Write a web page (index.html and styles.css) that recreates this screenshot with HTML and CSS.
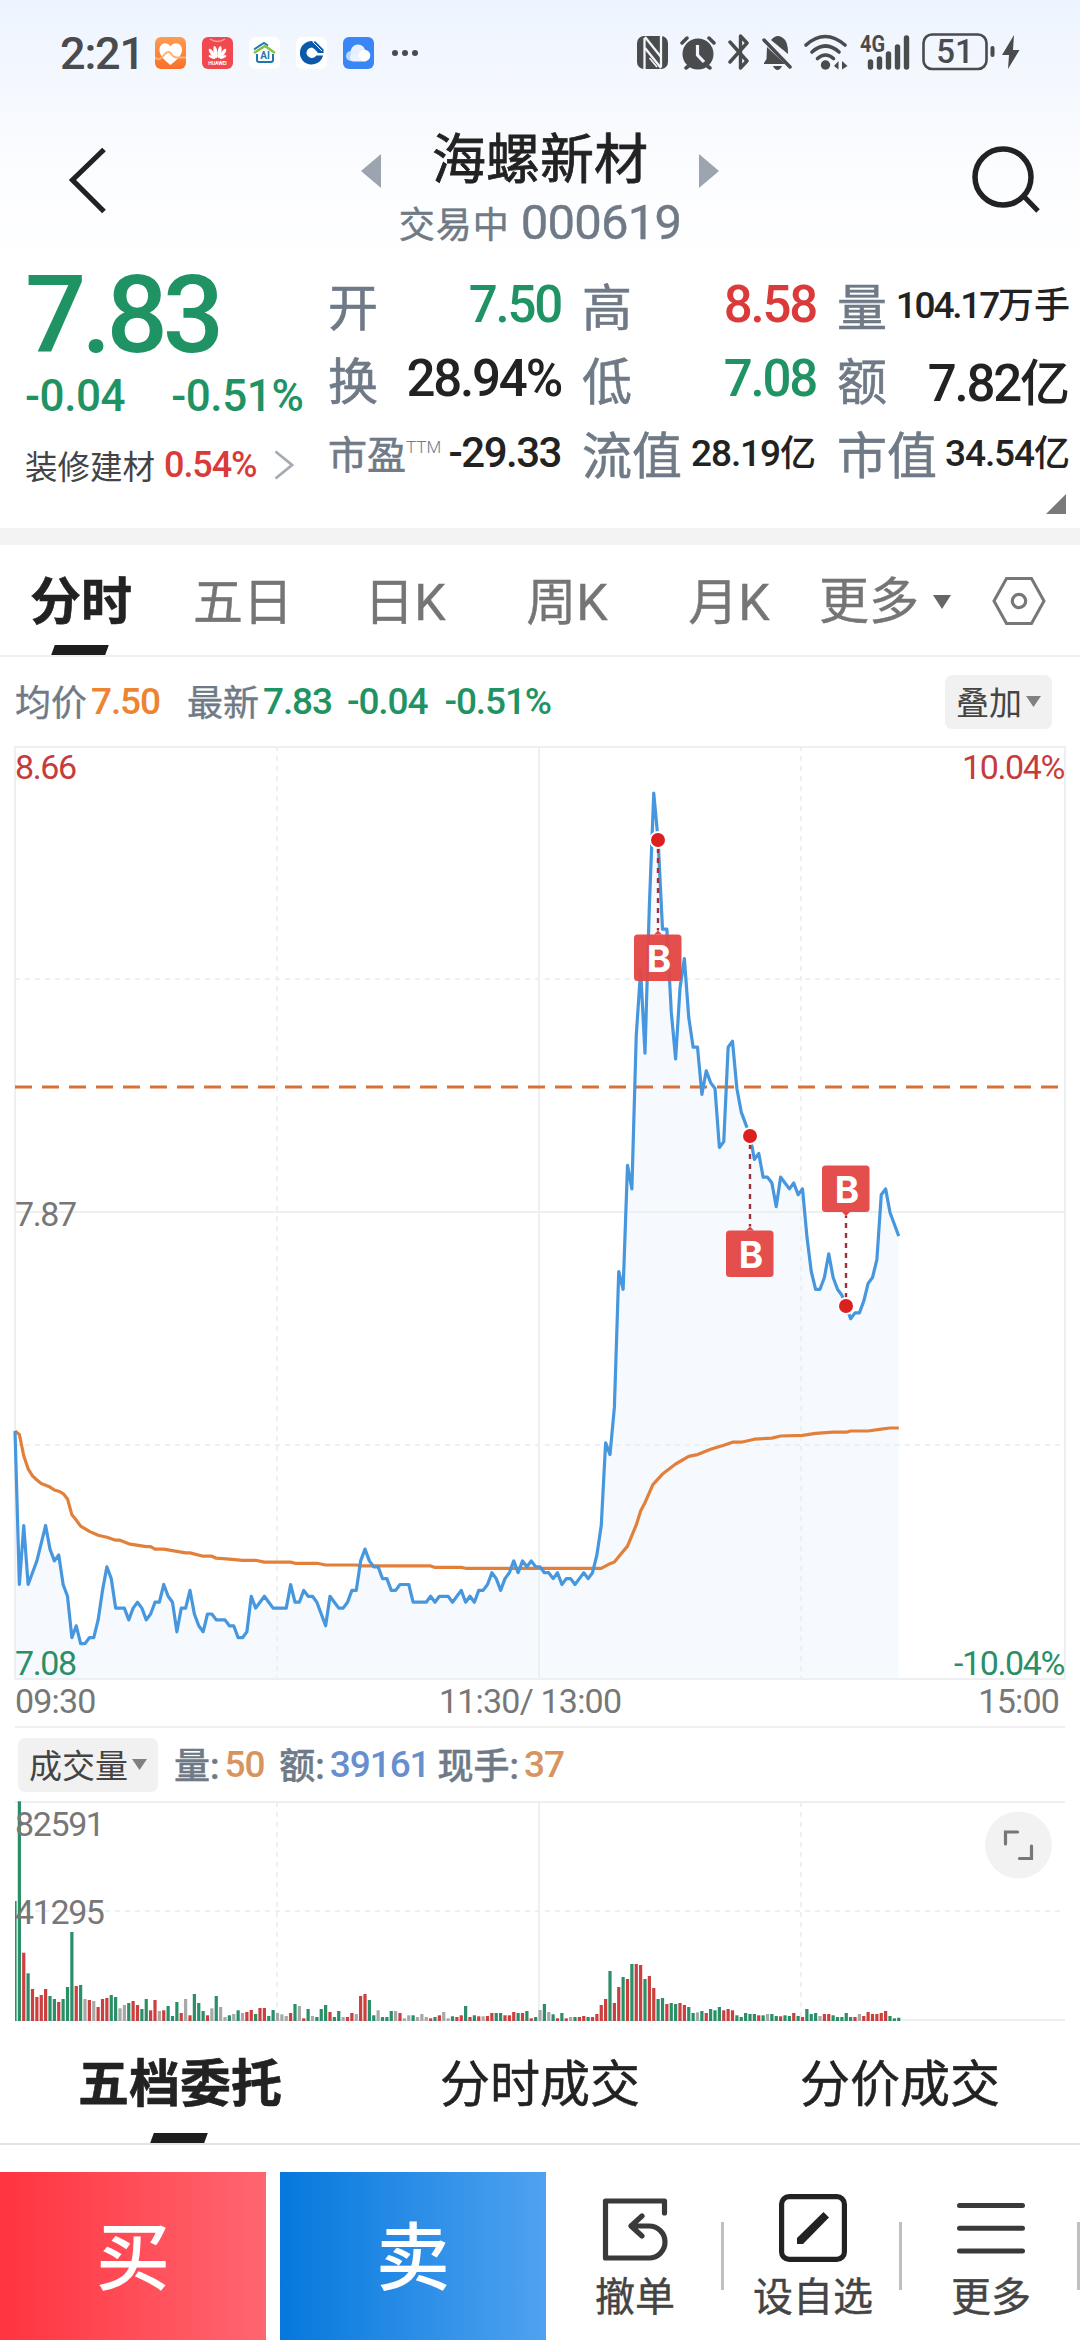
FILE: index.html
```html
<!DOCTYPE html>
<html lang="zh-CN">
<head>
<meta charset="utf-8">
<title>海螺新材 000619</title>
<link rel="stylesheet" href="styles.css">
</head>
<body>
<div class="screen">
  <div class="status">
    <span class="clock">2:21</span>
    <div class="apps">
      <svg width="31" height="32" viewBox="0 0 31 32"><defs><linearGradient id="og" x1="0" y1="0" x2="0" y2="1"><stop offset="0" stop-color="#ff9c50"/><stop offset="1" stop-color="#f9702a"/></linearGradient></defs><rect width="31" height="32" rx="6" fill="url(#og)"/><path d="M15.500 28C8 22 4.500 18 4.500 13C4.500 6 12 4 15.500 9.500C19 4 27 6 27 13C27 18 23 22 15.500 28Z" fill="#fff"/><path d="M0 20C3 24 6 22 9 18C12 14 15 14 17 18C20 22 23 20 31 20.500" fill="none" stroke="#ffb277" stroke-width="2"/></svg>
      <svg width="31" height="32" viewBox="0 0 31 32"><rect width="31" height="32" rx="6" fill="#f04a50"/><path d="M8 2Q15.500 7 23 2" fill="none" stroke="#ffa3a3" stroke-width="1.300"/><g fill="#fff"><ellipse cx="13.500" cy="15" rx="1.900" ry="6" transform="rotate(-10 13.500 15)"/><ellipse cx="17.500" cy="15" rx="1.900" ry="6" transform="rotate(10 17.500 15)"/><ellipse cx="10.300" cy="16.500" rx="1.800" ry="5.500" transform="rotate(-35 10.300 16.500)"/><ellipse cx="20.700" cy="16.500" rx="1.800" ry="5.500" transform="rotate(35 20.700 16.500)"/><ellipse cx="10" cy="20" rx="1.300" ry="3.500" transform="rotate(-68 10 20)"/><ellipse cx="21" cy="20" rx="1.300" ry="3.500" transform="rotate(68 21 20)"/></g><text x="15.500" y="27.500" class="tiny" text-anchor="middle" fill="#fff">HUAWEI</text></svg>
      <svg width="31" height="32" viewBox="0 0 31 32"><rect width="31" height="32" rx="6" fill="#fff"/><g fill="none" stroke-width="2"><path d="M5 12.500L15 6L19 8.500" stroke="#1c7fae"/><path d="M5 16L16 9L26 16" stroke="#86bf3c" stroke-width="2.400"/><path d="M8 17V23Q8 25 10 25H22Q24 25 24 23V17" stroke="#1f78a8"/></g><text x="16" y="22" class="tiny ai" text-anchor="middle" fill="#1f78a8">AI</text></svg>
      <svg width="31" height="32" viewBox="0 0 31 32"><rect width="31" height="32" rx="6" fill="#fff"/><path d="M18.500 4.500A11.700 11.700 0 1 0 27 18.500H20.500A5.500 5.500 0 0 1 10.500 16A5.500 5.500 0 0 1 16 10.500L18.500 12H24L16 4.500Z" fill="#0a5aa9"/><path d="M19 4L27.500 12.500V16H22L15 8Z" fill="#0a5aa9"/><path d="M17 5L26 14" stroke="#fff" stroke-width="1"/><path d="M15.500 11L20.500 16L15.500 21L10.500 16Z" fill="#fff"/></svg>
      <svg width="31" height="32" viewBox="0 0 31 32"><rect width="31" height="32" rx="6" fill="#3b86f6"/><circle cx="8" cy="19" r="5" fill="#b9d9ff"/><circle cx="15" cy="15" r="7.500" fill="#e4f0ff"/><rect x="7" y="17" width="18" height="7.500" rx="3.700" fill="#e9f3ff"/><circle cx="21.500" cy="18.500" r="5.800" fill="#fff"/></svg>
      <svg class="dots" width="28" height="32" viewBox="0 0 28 32" fill="#4a4b4d"><circle cx="4" cy="16" r="3"/><circle cx="14" cy="16" r="3"/><circle cx="24" cy="16" r="3"/></svg>
    </div>
    <div class="sys">
      <svg width="31" height="36" viewBox="0 0 31 36"><rect y="2" width="31" height="33" rx="7" fill="#4a4b4d"/><path d="M7.500 4V35M24 2V33" fill="none" stroke="#f1f5fc" stroke-width="2.300"/><path d="M8 3L24 23M8 14L24 34" fill="none" stroke="#f1f5fc" stroke-width="2.300"/><path d="M12.500 24L20 33" fill="none" stroke="#f1f5fc" stroke-width="1.500"/></svg>
      <svg width="36" height="36" viewBox="0 0 36 36"><circle cx="18" cy="20" r="15.500" fill="#4a4b4d"/><path d="M2 9L7 4M34 9L29 4M6 34L10 31M30 34L26 31" stroke="#4a4b4d" stroke-width="3.500" stroke-linecap="round"/><path d="M17.500 11V21L24 28" fill="none" stroke="#f1f5fc" stroke-width="3.200"/></svg>
      <svg width="22" height="36" viewBox="0 0 22 36"><path d="M2 8L19 27L12.500 34V2L19 9L2 28" fill="none" stroke="#4a4b4d" stroke-width="3.400" stroke-linejoin="round" stroke-linecap="round"/></svg>
      <svg width="30" height="36" viewBox="0 0 30 36"><path d="M5 13L23 30H2V29L4.500 25ZM9 6Q15 -1 21 4Q26 7 26 19V20Z" fill="#4a4b4d"/><path d="M2 6L28 33" stroke="#4a4b4d" stroke-width="3.500" stroke-linecap="round"/><path d="M11 32H20Q18 36 15.500 36T11 32Z" fill="#4a4b4d"/></svg>
      <svg width="44" height="36" viewBox="0 0 44 36"><g fill="none" stroke="#4a4b4d" stroke-width="3.600" stroke-linecap="round"><path d="M2 11Q21 -6 41 11"/><path d="M8 18Q21.500 6 35 18"/><path d="M13.500 24.500Q21.500 17.500 29.500 24.500"/></g><circle cx="21.500" cy="31" r="4.700" fill="#4a4b4d"/><path d="M30 32L34.500 27V35.500ZM43.500 32L38 27V35.500Z" fill="#4a4b4d"/></svg>
      <svg class="sig" width="50" height="46" viewBox="0 -6 50 46"><text x="0" y="18" class="net" textLength="25" lengthAdjust="spacingAndGlyphs">4G</text><path d="M10.500 28V33M19.500 25V33M28.500 20V33M37.500 13V33M46.500 4V33" stroke="#4a4b4d" stroke-width="5.400" stroke-linecap="round"/></svg>
      <svg class="batt" width="98" height="40" viewBox="0 0 98 40"><rect x="1.500" y="2.500" width="63" height="34.500" rx="8.500" fill="none" stroke="#4a4b4d" stroke-width="2.600"/><text x="33" y="30.500" class="pct" text-anchor="middle">51</text><path d="M70.500 16V23" stroke="#4a4b4d" stroke-width="4" stroke-linecap="round"/><path d="M92 3L80 23H87L86 37L97.500 18H91Z" fill="#4a4b4d"/></svg>
    </div>
  </div>

  <header class="head">
    <svg class="back" width="40" height="68" viewBox="0 0 40 68"><path d="M36 3.500L4.500 34L36 65.500" fill="none" stroke="#222" stroke-width="5.200"/></svg>
    <div class="titles">
      <svg width="20" height="34" viewBox="0 0 20 34"><path d="M20 0V34L0 17Z" fill="#9ba4af"/></svg>
      <div class="name"><h1>海螺新材</h1><p><span>交易中</span> <b>000619</b></p></div>
      <svg width="20" height="34" viewBox="0 0 20 34"><path d="M0 0V34L20 17Z" fill="#9ba4af"/></svg>
    </div>
    <svg class="search" width="70" height="70" viewBox="0 0 70 70"><circle cx="31" cy="31" r="28" fill="none" stroke="#222" stroke-width="5.500"/><path d="M52 50.500L66 65" stroke="#222" stroke-width="5"/></svg>
  </header>

  <section class="quote">
    <div class="last">
      <div class="price green">7.83</div>
      <div class="chg green"><span>-0.04</span><span>-0.51%</span></div>
      <div class="sector"><span>装修建材</span><b class="red">0.54%</b><svg width="20" height="30" viewBox="0 0 20 30"><path d="M1.500 1.500L18 15L1.500 28.500" fill="none" stroke="#a3abb5" stroke-width="2.800"/></svg></div>
    </div>
    <div class="grid">
      <div class="cell"><label>开</label><b class="green">7.50</b></div>
      <div class="cell"><label>高</label><b class="red">8.58</b></div>
      <div class="cell"><label>量</label><b class="sm tight">104.17<i>万手</i></b></div>
      <div class="cell"><label>换</label><b>28.94%</b></div>
      <div class="cell"><label>低</label><b class="green">7.08</b></div>
      <div class="cell"><label>额</label><b>7.82<i>亿</i></b></div>
      <div class="cell"><label class="pe">市盈<sup>TTM</sup></label><b class="md">-29.33</b></div>
      <div class="cell"><label>流值</label><b class="sm">28.19<i>亿</i></b></div>
      <div class="cell"><label>市值</label><b class="sm">34.54<i>亿</i></b></div>
    </div>
    <svg class="corner" width="20" height="20" viewBox="0 0 20 20"><path d="M20 0V20H0Z" fill="#7a7a7a"/></svg>
  </section>

  <nav class="tabs">
    <span class="tab on">分时</span><span class="tab">五日</span><span class="tab">日K</span><span class="tab">周K</span><span class="tab">月K</span>
    <span class="tab more">更多<svg width="18" height="14" viewBox="0 0 18 14"><path d="M0 0H18L9 14Z" fill="#666"/></svg></span>
    <svg class="hex" width="54" height="50" viewBox="0 0 54 50"><path d="M14.500 2.500H39.500L52 25L39.500 47.500H14.500L2 25Z" fill="none" stroke="#777" stroke-width="3"/><circle cx="27" cy="25" r="6.700" fill="none" stroke="#777" stroke-width="3.200"/></svg>
  </nav>

  <div class="info">
    <span class="k">均价</span><b class="orange">7.50</b>
    <span class="k k2">最新</span><b class="green">7.83</b><b class="green d1">-0.04</b><b class="green d2">-0.51%</b>
    <span class="pill">叠加<svg width="15" height="11" viewBox="0 0 15 11"><path d="M0 0H15L7.500 11Z" fill="#808080"/></svg></span>
  </div>

  <svg id="price-chart" class="chart" width="1080" height="934" viewBox="0 747 1080 934"></svg>
  <div class="axis"><span>09:30</span><span>11:30/ 13:00</span><span>15:00</span></div>

  <div class="volhead">
    <span class="pill">成交量<svg width="15" height="11" viewBox="0 0 15 11"><path d="M0 0H15L7.500 11Z" fill="#808080"/></svg></span>
    <span class="k">量:</span><b class="tan v1">50</b>
    <span class="k">额:</span><b class="blue v2">39161</b>
    <span class="k">现手:</span><b class="tan">37</b>
  </div>
  <svg id="volume-chart" class="chart" width="1080" height="220" viewBox="0 1802 1080 220"></svg>

  <nav class="subtabs"><span class="on">五档委托</span><span>分时成交</span><span>分价成交</span></nav>

  <footer class="actions">
    <button class="buy">买</button>
    <button class="sell">卖</button>
    <div class="act"><svg width="68" height="68" viewBox="0 0 68 68"><path d="M63.500 19V7H4.500V64H48A16 16 0 0 0 48 32H31M41 22L30 32L41 42" fill="none" stroke="#3a3a3a" stroke-width="5.200" stroke-linecap="round" stroke-linejoin="round"/></svg><span>撤单</span></div>
    <div class="act"><svg width="68" height="68" viewBox="0 0 68 68"><rect x="2.600" y="2.600" width="62.800" height="62.800" rx="7.500" fill="none" stroke="#222" stroke-width="5.200"/><path d="M44.500 18L50 23.500L24 50H18V44Z" fill="#222"/></svg><span>设自选</span></div>
    <div class="act"><svg width="68" height="68" viewBox="0 0 68 68"><path d="M2.500 11.500H65.500M2.500 34.200H65.500M2.500 57H65.500" stroke="#3a3a3a" stroke-width="5" stroke-linecap="round"/></svg><span>更多</span></div>
  </footer>
</div>
<script src="chart.js"></script>
</body>
</html>
```
FILE: styles.css
```css
* { box-sizing: border-box; margin: 0; padding: 0; }
body {
  width: 1080px;
  height: 2340px;
  overflow: hidden;
  background: #fff;
  color: #222;
  font-family: Roboto, "Noto Sans CJK SC", sans-serif;
}
b, i { font-style: normal; font-weight: 500; }
svg { display: block; flex: none; }
.screen {
  width: 1080px;
  height: 2340px;
  display: flex;
  flex-direction: column;
  background: linear-gradient(#edf4ff 0, #f5f8fe 90px, #fcfdff 180px, #fff 270px);
}
.green { color: #1f9363; }
.red { color: #da3a3a; }
.orange { color: #ec8431; }
.tan { color: #d89460; }
.blue { color: #678fd0; }

.status { height: 106px; display: flex; padding-left: 60px; }
.clock { width: 95px; font-size: 45px; line-height: 107px; font-weight: 500; color: #4a4b4d; letter-spacing: -1.2px; }
.apps { display: flex; gap: 16px; padding-top: 37px; }
.dots { margin-left: 1px; }
.sys { display: flex; gap: 12px; margin-left: auto; margin-right: 60px; padding-top: 34px; }
.batt { margin-top: -2px; }
.sig { margin-top: -6px; }
.tiny { font: 700 5px Roboto, sans-serif; }
.ai { font-size: 10px; }
.net { font: 700 23px Roboto, sans-serif; fill: #4a4b4d; }
.pct { font: 500 33px Roboto, sans-serif; fill: #4a4b4d; }

.head { height: 154px; display: flex; justify-content: space-between; padding: 0 38px 0 68px; }
.back { margin-top: 40px; }
.search { margin-top: 40px; }
.titles { display: flex; padding-left: 0; }
.titles > svg { margin-top: 48px; }
.name { width: 318px; text-align: center; }
.name h1 { font-size: 54px; line-height: 70px; font-weight: 400; -webkit-text-stroke: .8px #222; margin-top: 20px; margin-bottom: -4px; }
.name p { height: 60px; display: flex; justify-content: center; align-items: center; gap: 11px; color: #6f7a86; white-space: nowrap; }
.name p span { font-size: 36px; letter-spacing: 1px; -webkit-text-stroke: .5px; }
.name p b { font-size: 49px; font-weight: 400; letter-spacing: -.8px; -webkit-text-stroke: .4px; }

.quote { height: 269px; display: flex; position: relative; }
.last { width: 328px; padding-left: 25px; }
.price { font-size: 108px; line-height: 110px; font-weight: 500; letter-spacing: -5px; }
.chg { display: flex; gap: 46px; font-size: 44px; line-height: 52px; font-weight: 500; letter-spacing: -.4px; }
.sector { display: flex; align-items: center; height: 40px; margin-top: 23px; font-size: 32.500px; color: #444; }
.sector b { font-size: 36px; margin: 0 18px 0 9px; letter-spacing: -1.100px; }
.grid { display: grid; grid-template-columns: 233px 234px 233px; column-gap: 21px; grid-template-rows: 74px 74px 74px; padding-top: 7px; align-content: start; }
.cell { display: flex; justify-content: space-between; align-items: center; white-space: nowrap; }
.cell label { font-size: 50px; color: #6f7a86; -webkit-text-stroke: .6px; }
.cell b { font-size: 51px; letter-spacing: -2.200px; padding-top: 2px; }
.cell b i { font-size: 50px; letter-spacing: 0; }
.cell .sm { font-size: 37px; padding: 0 0 3px; letter-spacing: -1.100px; }
.cell .tight { letter-spacing: -2.200px; }
.cell .sm i { font-size: 36px; }
.cell .md { font-size: 42px; letter-spacing: -1.500px; }
.cell .pe { font-size: 39px; display: flex; }
.pe sup { font-size: 17px; font-weight: 300; line-height: 17px; margin-top: 15px; -webkit-text-stroke: 0; }
.corner { position: absolute; right: 14px; bottom: 14px; }

.tabs { height: 129px; border-top: 17px solid #f3f3f4; border-bottom: 2px solid #f0f0f0; display: flex; color: #757575; font-size: 50px; line-height: 116px; white-space: nowrap; }
.tab { width: 162px; height: 110px; text-align: center; position: relative; -webkit-text-stroke: .4px; }
.tab.on, .subtabs .on { color: #222; font-weight: 700; font-size: 51px; -webkit-text-stroke: .6px; }
.tab.on::after, .subtabs .on::after {
  content: ""; position: absolute; left: 50%; bottom: 0; width: 54px; height: 10px; margin-left: -28px;
  background: #1d1d1d; transform: skewX(-20deg);
}
.tab.more { width: 150px; display: flex; align-items: center; gap: 14px; margin-left: 9px; padding-top: 4px; }
.hex { margin: 31px 0 0 23px; }

.info { height: 90px; display: flex; align-items: center; padding: 0 28px 0 15px; font-size: 37px; white-space: nowrap; }
.k { font-size: 36px; color: #6f7a86; -webkit-text-stroke: .4px; padding-bottom: 3px; }
.info b, .volhead b { letter-spacing: -1.100px; }
.info .k { margin-right: 4px; }
.info .k2 { margin-left: 27px; }
.d1 { margin-left: 15px; }
.d2 { margin-left: 17px; }
.pill { display: flex; align-items: center; gap: 4px; height: 54px; padding: 0 11px 1px; border-radius: 7px; background: #f1f1f1; color: #444; font-size: 33px; }
.info .pill { margin-left: auto; }

.axis { height: 48px; margin: 0 15px; border-bottom: 2px solid #f0f0f0; display: grid; grid-template-columns: 424px 1fr auto; font-size: 34px; line-height: 42px; color: #777; letter-spacing: -.8px; }
.axis span:last-child { padding-right: 6px; }
.volhead { height: 73px; display: flex; align-items: center; padding-left: 18px; font-size: 37px; white-space: nowrap; }
.volhead .pill { margin-right: 16px; }
.volhead .k { font-weight: 500; margin-right: 5px; }
.v1 { margin-right: 15px; }
.v2 { margin-right: 8px; }
.chart text { font: 400 34px Roboto, sans-serif; letter-spacing: -1.400px; }
.chart .mark { font: 700 37px Inter, sans-serif; fill: #fff; letter-spacing: 0; }

.subtabs { height: 124px; border-bottom: 2px solid #e3e3e3; display: grid; grid-template-columns: repeat(3, 360px); text-align: center; font-size: 50px; line-height: 128px; -webkit-text-stroke: .5px; }
.subtabs span { position: relative; height: 122px; }
.actions { margin-top: 27px; height: 168px; display: flex; }
.actions button { border: 0; width: 266px; color: #fff; font: 500 74px/160px "Noto Sans CJK SC", sans-serif; padding-bottom: 8px; }
.buy { background: linear-gradient(90deg, #ff3440, #ff6670); margin-right: 14px; }
.sell { background: linear-gradient(90deg, #0578dd, #4fa2f0); }
.act { width: 178px; height: 168px; padding-top: 22px; display: flex; flex-direction: column; align-items: center; font-size: 40px; line-height: 66px; color: #444; background: linear-gradient(#c0c0c0, #c0c0c0) right 50px / 3px 68px no-repeat; }
.act span { margin-top: 3px; -webkit-text-stroke: .4px; }
```
FILE: chart.js
```js
const GREEN = '#2a8f68', RED = '#cb403f', GREY = '#a8a8a8';
const LEFT = 15, MINUTE = 4.375;
const px = m => LEFT + m * MINUTE;
const py = p => 747 + (8.66 - p) * 590.5;

// Last price of every minute, in cents
const prices = [
  750,724,734,724,726,728,731,734,730,728,729,724,722,715,717,714,714,715,715,718,
  723,727,725,720,720,720,718,720,721,720,718,719,721,721,724,722,721,716,720,720,
  723,719,717,716,719,719,718,718,718,717,717,715,715,716,722,720,721,722,721,720,
  720,720,720,724,721,721,723,722,722,721,719,717,722,721,720,720,721,723,723,728,
  730,728,727,727,725,725,723,723,724,724,724,721,721,721,721,722,721,722,722,722,
  721,722,723,721,722,721,723,723,724,726,725,723,725,726,728,726,728,727,728,727,
  727,726,726,725,726,724,725,725,724,725,726,725,726,729,734,748,746,754,777,774,
  795,791,817,828,814,839,858,850,835,835,821,813,825,830,820,815,815,807,811,809,
  808,798,799,815,816,808,804,802,800,796,797,793,793,792,788,793,792,791,792,790,
  791,783,777,774,774,776,780,776,774,773,771,769,770,770,772,775,776,779,790,791,
  787,785,783
];

// Average price: [minute, price]
const average = [
  [0,7.5],[1,7.494],[2,7.458],[3,7.436],[4,7.424],[5,7.417],[6,7.411],[7,7.408],[8,7.405],[9,7.4],[10,7.398],
  [11,7.394],[12,7.385],[13,7.358],[14,7.349],[15,7.339],[17,7.33],[19,7.3235],[21,7.32],[23,7.315],[24,7.315],
  [26,7.309],[30,7.304],[31,7.304],[32,7.3],[34,7.3],[39,7.2935],[40,7.2935],[43,7.288],[45,7.288],[46,7.2845],
  [49,7.283],[52,7.281],[55,7.281],[57,7.278],[63,7.278],[64,7.276],[69,7.276],[71,7.273],[78,7.273],[79,7.2715],
  [95,7.2715],[96,7.269],[102,7.269],[103,7.2675],[134,7.2675],[136,7.2753],[137,7.278],[138.3,7.29],[140,7.305],
  [142,7.341],[143,7.3645],[144,7.3786],[145.8,7.409],[148,7.427],[151,7.444],[154,7.457],[156,7.46],[159,7.469],
  [162,7.476],[164,7.481],[166,7.481],[169,7.486],[173,7.488],[175,7.4915],[180,7.4926],[183,7.496],[187,7.498],
  [190,7.498],[191,7.5],[195,7.5],[198,7.503],[200,7.505],[202,7.505]
];

// Volume bar of every minute: direction (g down, r up, n flat) and height
const volume = `g360 g659 r205 g143 r96 r72 r78 r96 g75 g66 r57 g66 g102 g267 r105 g108 n66 r63 n60 r42
r66 r69 g78 g72 n38 n48 g54 r60 r48 g36 g66 r32 r63 n30 r32 g45 g15 g57 r24 n66
r17 g81 g54 g30 r17 n38 g75 n42 n12 g17 n21 g32 n24 r27 r33 g21 r39 r39 g15 g33
n24 n20 n15 r24 g51 n45 r8 g36 n15 g12 g36 g48 r27 g12 g30 n12 r12 r24 n21 r75
r81 g63 g17 n32 g12 g12 g30 n30 r24 n8 n17 g17 n12 n21 n12 r8 g12 r17 n27 n8
g14 r12 r17 g45 r12 g17 r14 n14 r15 r24 g24 g24 r17 r17 r27 g24 r24 g30 r8 g12
n33 g51 n27 g20 r8 g24 r8 n12 g12 r12 r15 g12 r12 r21 r48 r66 g150 r54 r102 g132
r126 g171 r171 r168 g126 r135 r99 g66 g69 r51 g54 g51 r54 r48 g42 g24 n26 g30 r24 g36
g32 g42 r32 r36 r32 g17 g12 g24 g21 g21 r17 g17 n21 g21 g15 r14 g17 g15 r24 g15
r12 g36 g21 g24 n15 r21 r21 g17 g12 g12 g24 g12 r12 n21 r15 r27 r21 r21 r24 r30
g15 g8 g10`.split(/\s+/);

const line = (x1, y1, x2, y2, dashed) =>
  `<line x1="${x1}" y1="${y1}" x2="${x2}" y2="${y2}" stroke="#edf0f0" stroke-width="2"${dashed ? ' stroke-dasharray="5 5"' : ''}/>`;

const points = prices.map((c, m) => `${px(m)},${py(c / 100).toFixed(1)}`).join(' ');

const marker = (x, dot, top, below) => `
  <line x1="${x}" y1="${below ? dot + 8 : dot - 8}" x2="${x}" y2="${below ? top - 4 : top + 50}" stroke="#a03038" stroke-width="2.4" stroke-dasharray="5 5"/>
  <rect x="${x - 24}" y="${top}" width="47.500" height="46.500" rx="3.500" fill="#e34745" fill-opacity=".96"/>
  <path d="${below ? `M${x - 4} ${top}L${x} ${top - 4}L${x + 4} ${top}Z` : `M${x - 4} ${top + 46.5}L${x} ${top + 50.5}L${x + 4} ${top + 46.5}Z`}" fill="#e34745"/>
  <text class="mark" x="${x + 1}" y="${top + 37}" text-anchor="middle">B</text>
  <circle cx="${x}" cy="${dot}" r="8" fill="#dc2020" stroke="#fff" stroke-width="2"/>`;

document.getElementById('price-chart').innerHTML =
  `<polygon points="15,1680 ${points} ${px(202)},1680" fill="#f6faff"/>` +
  line(15, 748, 1065, 748) + line(15, 1213, 1065, 1213) + line(15, 1680, 1065, 1680) +
  line(15, 747, 15, 1680) + line(539, 747, 539, 1680) + line(1065, 747, 1065, 1680) +
  line(277, 747, 277, 1680, true) + line(801, 747, 801, 1680, true) +
  line(15, 980, 1065, 980, true) + line(15, 1446, 1065, 1446, true) +
  `<line x1="15" y1="1088" x2="1065" y2="1088" stroke="#d97137" stroke-width="3" stroke-dasharray="17 10"/>
  <polyline points="${average.map(([m, p]) => `${px(m)},${py(p).toFixed(1)}`).join(' ')}" fill="none" stroke="#e2803a" stroke-width="3.200" stroke-linejoin="round"/>
  <polyline points="${points}" fill="none" stroke="#4797de" stroke-width="3.200" stroke-linejoin="round"/>
  <text x="15" y="780" fill="#c63c3c">8.66</text>
  <text x="1064" y="780" fill="#c63c3c" text-anchor="end">10.04%</text>
  <text x="15" y="1227" fill="#777">7.87</text>
  <text x="15" y="1676" fill="#2a8f68">7.08</text>
  <text x="1064" y="1676" fill="#2a8f68" text-anchor="end">-10.04%</text>` +
  marker(658, 841, 935.5, true) + marker(750, 1137, 1231.5, true) + marker(846, 1307, 1166.5, false);

document.getElementById('volume-chart').innerHTML =
  line(15, 1803, 1065, 1803) + line(15, 2021, 1065, 2021) + line(539, 1803, 539, 2021) +
  line(277, 1803, 277, 2021, true) + line(801, 1803, 801, 2021, true) + line(15, 1912, 1065, 1912, true) +
  volume.map((v, m) => {
    const h = v.slice(1) / 3, fill = { g: GREEN, r: RED, n: GREY }[v[0]];
    const x = Math.max(15, px(m) - 1.6);
    return `<rect x="${x}" y="${(2022 - h).toFixed(1)}" width="${m ? 3.2 : 1.6}" height="${h.toFixed(1)}" fill="${fill}"/>`;
  }).join('') +
  `<text x="15" y="1837" fill="#777">82591</text><text x="15" y="1925" fill="#777">41295</text>
  <circle cx="1018.500" cy="1846" r="33.500" fill="#f2f2f2"/>
  <path d="M1017.500 1833H1005.500V1845M1019.500 1859.500H1031.500V1847" fill="none" stroke="#777" stroke-width="3.200" stroke-linecap="round"/>`;
```
